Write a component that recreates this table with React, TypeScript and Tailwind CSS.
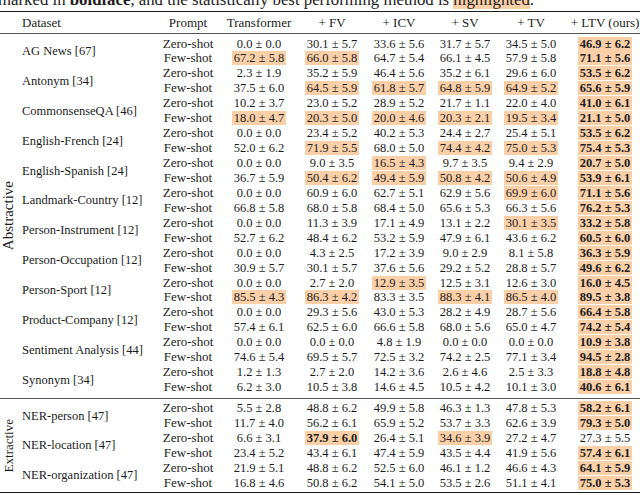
import React from "react";

const W = ["w-[70px]", "w-[76px]", "w-[58px]", "w-[74px]", "w-[58px]", "w-[90px]"];

type Group = { name: string; rows: [string, string[]][] };

const Z = "Zero-shot";
const F = "Few-shot";

const abstractive: Group[] = [
  { name: "AG News [67]", rows: [
    [Z, ["0.0 ± 0.0", "30.1 ± 5.7", "33.6 ± 5.6", "31.7 ± 5.7", "34.5 ± 5.0", "*46.9 ± 6.2"]],
    [F, ["^67.2 ± 5.8", "^66.0 ± 5.8", "64.7 ± 5.4", "66.1 ± 4.5", "57.9 ± 5.8", "*71.1 ± 5.6"]],
  ]},
  { name: "Antonym [34]", rows: [
    [Z, ["2.3 ± 1.9", "35.2 ± 5.9", "46.4 ± 5.6", "35.2 ± 6.1", "29.6 ± 6.0", "*53.5 ± 6.2"]],
    [F, ["37.5 ± 6.0", "^64.5 ± 5.9", "^61.8 ± 5.7", "^64.8 ± 5.9", "^64.9 ± 5.2", "*65.6 ± 5.9"]],
  ]},
  { name: "CommonsenseQA [46]", rows: [
    [Z, ["10.2 ± 3.7", "23.0 ± 5.2", "28.9 ± 5.2", "21.7 ± 1.1", "22.0 ± 4.0", "*41.0 ± 6.1"]],
    [F, ["^18.0 ± 4.7", "^20.3 ± 5.0", "^20.0 ± 4.6", "^20.3 ± 2.1", "^19.5 ± 3.4", "*21.1 ± 5.0"]],
  ]},
  { name: "English-French [24]", rows: [
    [Z, ["0.0 ± 0.0", "23.4 ± 5.2", "40.2 ± 5.3", "24.4 ± 2.7", "25.4 ± 5.1", "*53.5 ± 6.2"]],
    [F, ["52.0 ± 6.2", "^71.9 ± 5.5", "68.0 ± 5.0", "^74.4 ± 4.2", "^75.0 ± 5.3", "*75.4 ± 5.3"]],
  ]},
  { name: "English-Spanish [24]", rows: [
    [Z, ["0.0 ± 0.0", "9.0 ± 3.5", "^16.5 ± 4.3", "9.7 ± 3.5", "9.4 ± 2.9", "*20.7 ± 5.0"]],
    [F, ["36.7 ± 5.9", "^50.4 ± 6.2", "^49.4 ± 5.9", "^50.8 ± 4.2", "^50.6 ± 4.9", "*53.9 ± 6.1"]],
  ]},
  { name: "Landmark-Country [12]", rows: [
    [Z, ["0.0 ± 0.0", "60.9 ± 6.0", "62.7 ± 5.1", "62.9 ± 5.6", "^69.9 ± 6.0", "*71.1 ± 5.6"]],
    [F, ["66.8 ± 5.8", "68.0 ± 5.8", "68.4 ± 5.0", "65.6 ± 5.3", "66.3 ± 5.6", "*76.2 ± 5.3"]],
  ]},
  { name: "Person-Instrument [12]", rows: [
    [Z, ["0.0 ± 0.0", "11.3 ± 3.9", "17.1 ± 4.9", "13.1 ± 2.2", "^30.1 ± 3.5", "*33.2 ± 5.8"]],
    [F, ["52.7 ± 6.2", "48.4 ± 6.2", "53.2 ± 5.9", "47.9 ± 6.1", "43.6 ± 6.2", "*60.5 ± 6.0"]],
  ]},
  { name: "Person-Occupation [12]", rows: [
    [Z, ["0.0 ± 0.0", "4.3 ± 2.5", "17.2 ± 3.9", "9.0 ± 2.9", "8.1 ± 5.8", "*36.3 ± 5.9"]],
    [F, ["30.9 ± 5.7", "30.1 ± 5.7", "37.6 ± 5.6", "29.2 ± 5.2", "28.8 ± 5.7", "*49.6 ± 6.2"]],
  ]},
  { name: "Person-Sport [12]", rows: [
    [Z, ["0.0 ± 0.0", "2.7 ± 2.0", "^12.9 ± 3.5", "12.5 ± 3.1", "12.6 ± 3.0", "*16.0 ± 4.5"]],
    [F, ["^85.5 ± 4.3", "^86.3 ± 4.2", "83.3 ± 3.5", "^88.3 ± 4.1", "^86.5 ± 4.0", "*89.5 ± 3.8"]],
  ]},
  { name: "Product-Company [12]", rows: [
    [Z, ["0.0 ± 0.0", "29.3 ± 5.6", "43.0 ± 5.3", "28.2 ± 4.9", "28.7 ± 5.6", "*66.4 ± 5.8"]],
    [F, ["57.4 ± 6.1", "62.5 ± 6.0", "66.6 ± 5.8", "68.0 ± 5.6", "65.0 ± 4.7", "*74.2 ± 5.4"]],
  ]},
  { name: "Sentiment Analysis [44]", rows: [
    [Z, ["0.0 ± 0.0", "0.0 ± 0.0", "4.8 ± 1.9", "0.0 ± 0.0", "0.0 ± 0.0", "*10.9 ± 3.8"]],
    [F, ["74.6 ± 5.4", "69.5 ± 5.7", "72.5 ± 3.2", "74.2 ± 2.5", "77.1 ± 3.4", "*94.5 ± 2.8"]],
  ]},
  { name: "Synonym [34]", rows: [
    [Z, ["1.2 ± 1.3", "2.7 ± 2.0", "14.2 ± 3.6", "2.6 ± 4.6", "2.5 ± 3.3", "*18.8 ± 4.8"]],
    [F, ["6.2 ± 3.0", "10.5 ± 3.8", "14.6 ± 4.5", "10.5 ± 4.2", "10.1 ± 3.0", "*40.6 ± 6.1"]],
  ]},
];

const extractive: Group[] = [
  { name: "NER-person [47]", rows: [
    [Z, ["5.5 ± 2.8", "48.8 ± 6.2", "49.9 ± 5.8", "46.3 ± 1.3", "47.8 ± 5.3", "*58.2 ± 6.1"]],
    [F, ["11.7 ± 4.0", "56.2 ± 6.1", "65.9 ± 5.2", "53.7 ± 3.3", "62.6 ± 3.9", "*79.3 ± 5.0"]],
  ]},
  { name: "NER-location [47]", rows: [
    [Z, ["6.6 ± 3.1", "*37.9 ± 6.0", "26.4 ± 5.1", "^34.6 ± 3.9", "27.2 ± 4.7", "27.3 ± 5.5"]],
    [F, ["23.4 ± 5.2", "43.4 ± 6.1", "47.4 ± 5.9", "43.5 ± 4.4", "41.9 ± 5.6", "*57.4 ± 6.1"]],
  ]},
  { name: "NER-organization [47]", rows: [
    [Z, ["21.9 ± 5.1", "48.8 ± 6.2", "52.5 ± 6.0", "46.1 ± 1.2", "46.6 ± 4.3", "*64.1 ± 5.9"]],
    [F, ["16.8 ± 4.6", "50.8 ± 6.2", "54.1 ± 5.0", "53.5 ± 2.6", "51.1 ± 4.1", "*75.0 ± 5.3"]],
  ]},
];

function Val({ s }: { s: string }) {
  let text = s;
  let hl = false;
  let bold = false;
  if (s.startsWith("*")) {
    hl = true;
    bold = true;
    text = s.slice(1);
  } else if (s.startsWith("^")) {
    hl = true;
    text = s.slice(1);
  }
  return (
    <span className={`px-[2px] ${hl ? "bg-[#fbd0a8]" : ""} ${bold ? "font-bold" : ""}`}>{text}</span>
  );
}

function Section({ label, groups, labelSize }: { label: string; groups: Group[]; labelSize: string }) {
  return (
    <div className="flex">
      <div className="flex w-[16px] flex-none items-center justify-center">
        <span className={`[writing-mode:vertical-rl] rotate-180 leading-none whitespace-nowrap ${labelSize}`}>{label}</span>
      </div>
      <div className="flex flex-col">
        {groups.map((g) => (
          <div key={g.name} className="flex">
            <div className="flex w-[136px] flex-none items-center whitespace-nowrap pl-[6px] text-[12.5px]">{g.name}</div>
            <div className="flex flex-col">
              {g.rows.map(([p, vals], ri) => (
                <div key={ri} className="flex h-[14.95px] items-center leading-[14.95px]">
                  <div className="w-[72px] flex-none text-center text-[13px]">{p}</div>
                  {vals.map((v, i) => (
                    <div key={i} className={`${W[i]} flex-none whitespace-nowrap text-center text-[12.5px]`}>
                      <Val s={v} />
                    </div>
                  ))}
                </div>
              ))}
            </div>
          </div>
        ))}
      </div>
    </div>
  );
}

export default function App() {
  const headers = ["Transformer", "+ FV", "+ ICV", "+ SV", "+ TV", "+ LTV (ours)"];
  return (
    <div
      className="relative flex h-[495px] w-[640px] flex-col overflow-hidden bg-white text-[#1c1c1c]"
      style={{ fontFamily: '"Liberation Serif", "Times New Roman", serif' }}
    >
      <div className="flex h-[11px] flex-none items-start">
        <div className="-mt-[8px] ml-[-2px] whitespace-nowrap text-[16.8px] leading-[16.8px]">
          marked in <span className="font-bold">boldface</span>, and the statistically best performing method is{" "}
          <span className="bg-[#fbd0a8]">highlighted</span>.
        </div>
      </div>
      <div className="h-px w-full flex-none bg-[#1a1a1a]" />
      <div className="flex h-[21px] w-[650px] flex-none items-center text-[13px]">
        <div className="w-[16px] flex-none" />
        <div className="w-[136px] flex-none pl-[6px]">Dataset</div>
        <div className="w-[72px] flex-none text-center">Prompt</div>
        {headers.map((h, i) => (
          <div key={h} className={`${W[i]} flex-none whitespace-nowrap text-center`}>{h}</div>
        ))}
      </div>
      <div className="h-px w-full flex-none bg-[#555]" />
      <div className="mt-[2.5px] flex-none">
        <Section label="Abstractive" groups={abstractive} labelSize="text-[15px]" />
      </div>
      <div className="mt-[3px] h-px w-full flex-none bg-[#555]" />
      <div className="mt-[2px] flex-none">
        <Section label="Extractive" groups={extractive} labelSize="text-[13px]" />
      </div>
      <div className="mt-[1.5px] h-px w-full flex-none bg-[#1a1a1a]" />
    </div>
  );
}
